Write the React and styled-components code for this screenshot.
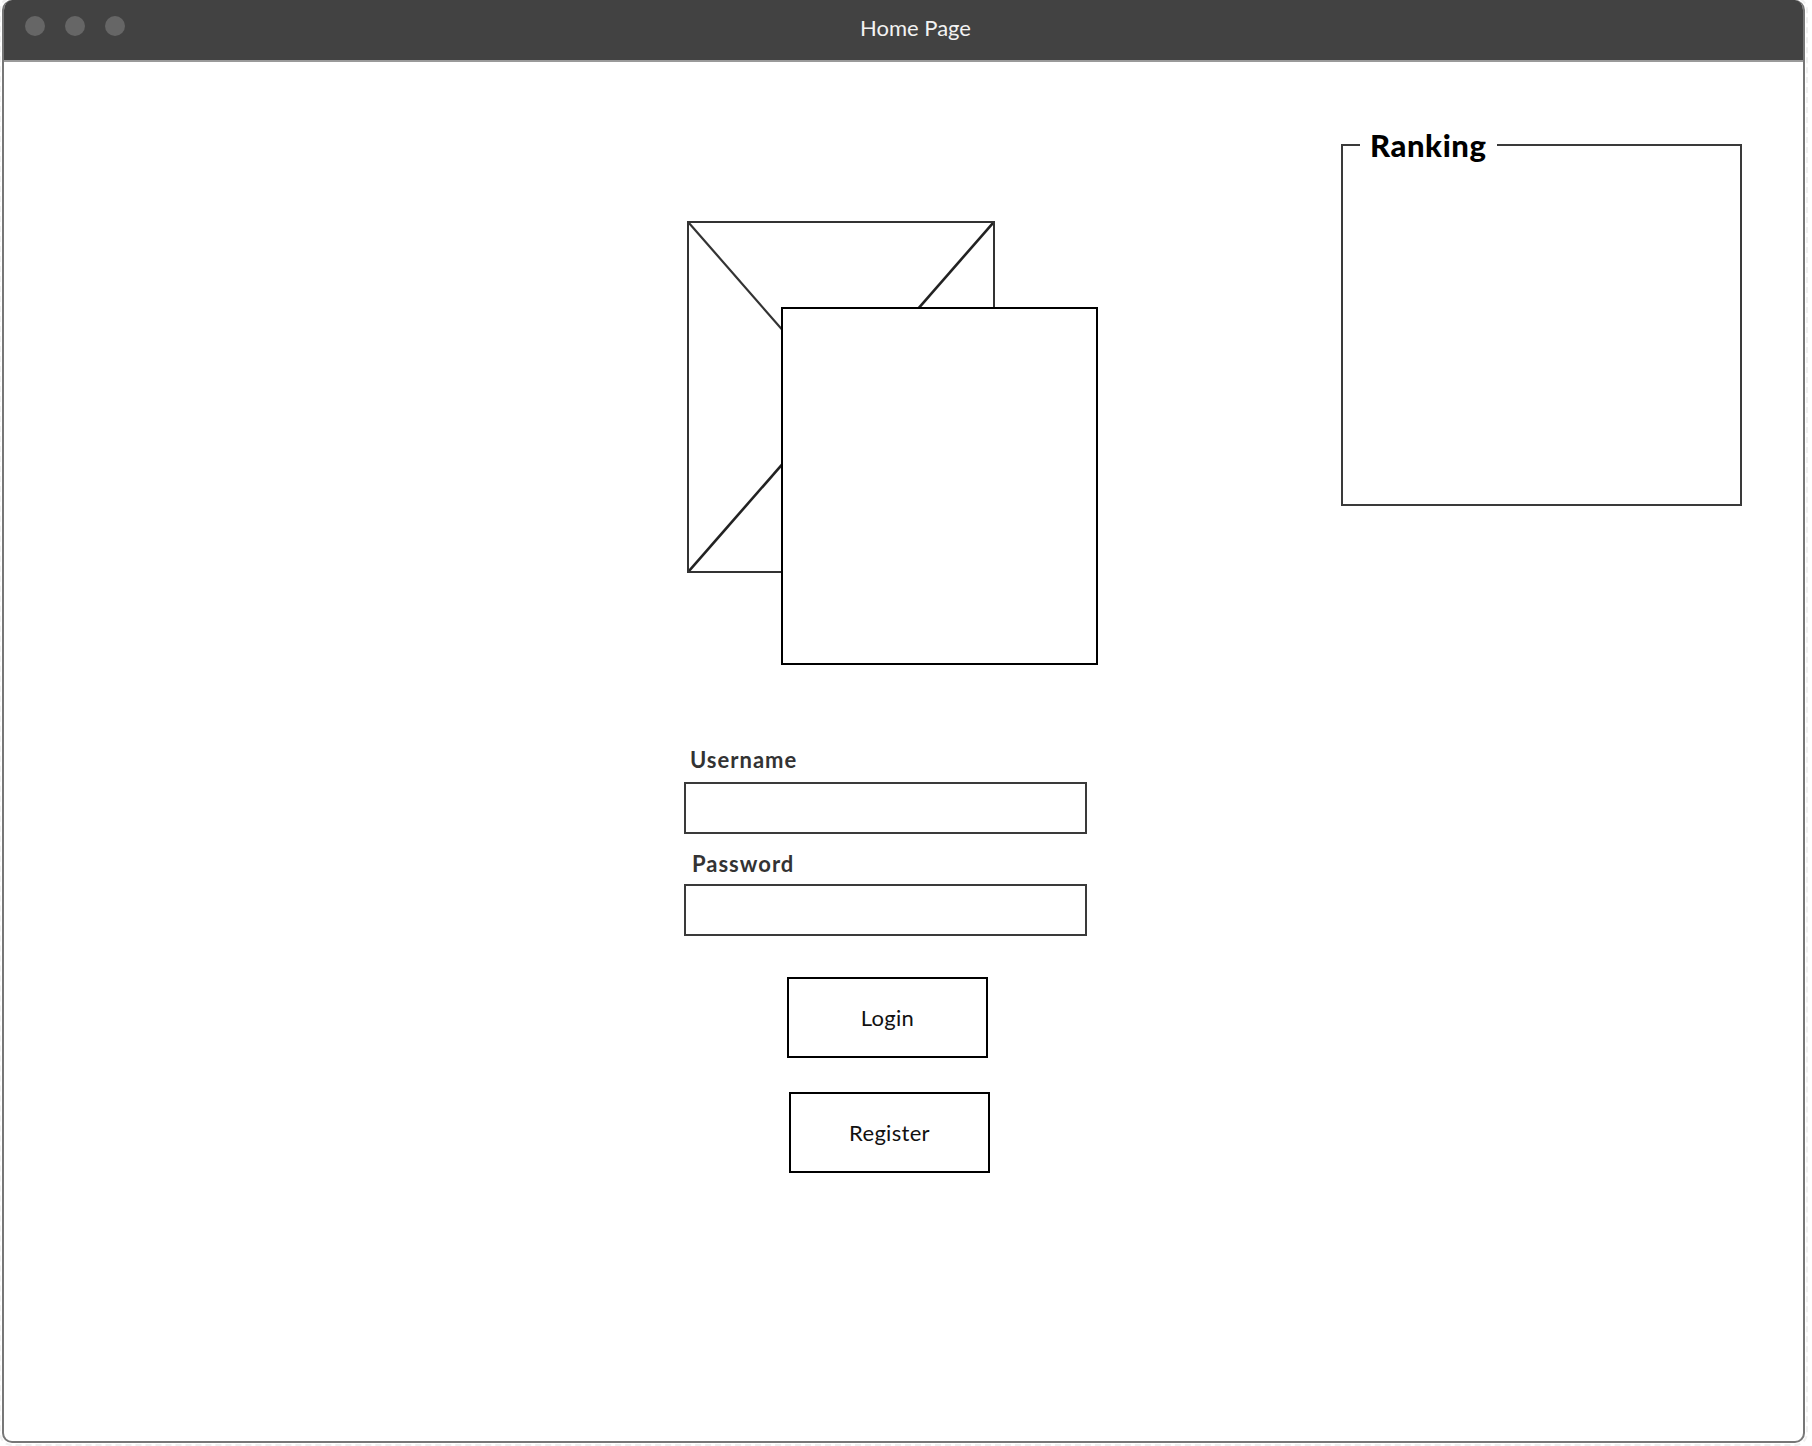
import styled, { createGlobalStyle } from "styled-components"

const GlobalStyle = createGlobalStyle`
    html, body {
        margin: 0;
        padding: 0;
        background: #ffffff;
    }
    body {
        font-family: Lato, "Liberation Sans", sans-serif;
    }
`;

const Page = styled.div`
    width: 1812px;
    height: 1446px;
    padding: 0 7px 3px 2px;
    box-sizing: border-box;
`;

const Window = styled.div`
    height: 1443px;
    border: 2px solid #777777;
    border-top: none;
    border-radius: 10px;
    overflow: hidden;
    box-sizing: border-box;
    display: flex;
    flex-direction: column;
    outline: 2px dashed #f0f0f0;
    outline-offset: 1px;
`;

const TitleBar = styled.div`
    height: 60px;
    flex-shrink: 0;
    background: #424242;
    border-bottom: 2px solid #9a9a9a;
    display: flex;
    align-items: center;
    position: relative;
    padding-left: 21px;
`;

const Dots = styled.div`
    display: flex;
    gap: 20px;
    margin-top: -8px;
`;

const Dot = styled.span`
    width: 20px;
    height: 20px;
    border-radius: 50%;
    background: #666666;
`;

const Title = styled.div`
    position: absolute;
    left: 24px;
    right: 0;
    top: 0;
    bottom: 0;
    display: flex;
    align-items: center;
    justify-content: center;
    color: #f2f2f2;
    font-size: 22px;
    padding-bottom: 6px;
`;

const Content = styled.div`
    flex: 1;
    display: flex;
    align-items: flex-start;
    padding-left: 680px;
    gap: 244px;
`;

const Main = styled.div`
    width: 413px;
    display: flex;
    flex-direction: column;
`;

const ImageStack = styled.div`
    position: relative;
    margin-top: 159px;
    margin-left: 3px;
    height: 444px;
`;

const Placeholder = styled.div`
    width: 308px;
    height: 352px;
    border: 2px solid #333333;
    box-sizing: border-box;

    svg {
        display: block;
        width: 100%;
        height: 100%;
    }
`;

const Card = styled.div`
    position: absolute;
    left: 94px;
    top: 86px;
    width: 317px;
    height: 358px;
    border: 2px solid #000000;
    box-sizing: border-box;
    background: #ffffff;
`;

const Label = styled.label`
    display: block;
    font-size: 22px;
    line-height: 26px;
    font-weight: 700;
    letter-spacing: 1px;
    color: #333333;
    padding-left: ${(p) => p.$indent}px;
    margin-top: ${(p) => p.$top}px;
`;

const Input = styled.input`
    display: block;
    width: 403px;
    height: 52px;
    margin-top: ${(p) => p.$top}px;
    border: 2px solid #3a3a3a;
    box-sizing: border-box;
    padding: 0 10px;
    font: inherit;
    background: #ffffff;
    outline: none;
`;

const Button = styled.button`
    display: flex;
    align-items: center;
    justify-content: center;
    width: 201px;
    height: 81px;
    margin-top: ${(p) => p.$top}px;
    margin-left: ${(p) => p.$left}px;
    border: 2px solid #000000;
    box-sizing: border-box;
    background: #ffffff;
    color: #111111;
    font-family: Lato, "Liberation Sans", sans-serif;
    font-size: 22px;
    letter-spacing: 0.3px;
    cursor: pointer;
`;

const Ranking = styled.fieldset`
    margin: 65px 0 0 0;
    padding: 0;
    width: 401px;
    box-sizing: border-box;
    border: 2px solid #3a3a3a;
`;

const Legend = styled.legend`
    margin-left: 17px;
    padding: 0 10px;
    font-size: 31px;
    line-height: 36px;
    font-weight: 900;
    letter-spacing: 0.6px;
    color: #000000;
`;

const RankingBody = styled.div`
    height: 341px;
`;

const App = () => {
    return (
        <>
            <GlobalStyle />
            <Page>
                <Window>
                    <TitleBar>
                        <Dots>
                            <Dot />
                            <Dot />
                            <Dot />
                        </Dots>
                        <Title>Home Page</Title>
                    </TitleBar>
                    <Content>
                        <Main>
                            <ImageStack>
                                <Placeholder>
                                    <svg viewBox="0 0 100 100" preserveAspectRatio="none">
                                        <line x1="0" y1="0" x2="100" y2="100" stroke="#333333" strokeWidth="2.2" vectorEffect="non-scaling-stroke" />
                                        <line x1="100" y1="0" x2="0" y2="100" stroke="#222222" strokeWidth="2.6" vectorEffect="non-scaling-stroke" />
                                    </svg>
                                </Placeholder>
                                <Card />
                            </ImageStack>
                            <Label $top={82} $indent={6}>Username</Label>
                            <Input $top={9} />
                            <Label $top={17} $indent={8}>Password</Label>
                            <Input $top={7} />
                            <Button $top={41} $left={103}>Login</Button>
                            <Button $top={34} $left={105}>Register</Button>
                        </Main>
                        <Ranking>
                            <Legend>Ranking</Legend>
                            <RankingBody />
                        </Ranking>
                    </Content>
                </Window>
            </Page>
        </>
    )
}

export default App
